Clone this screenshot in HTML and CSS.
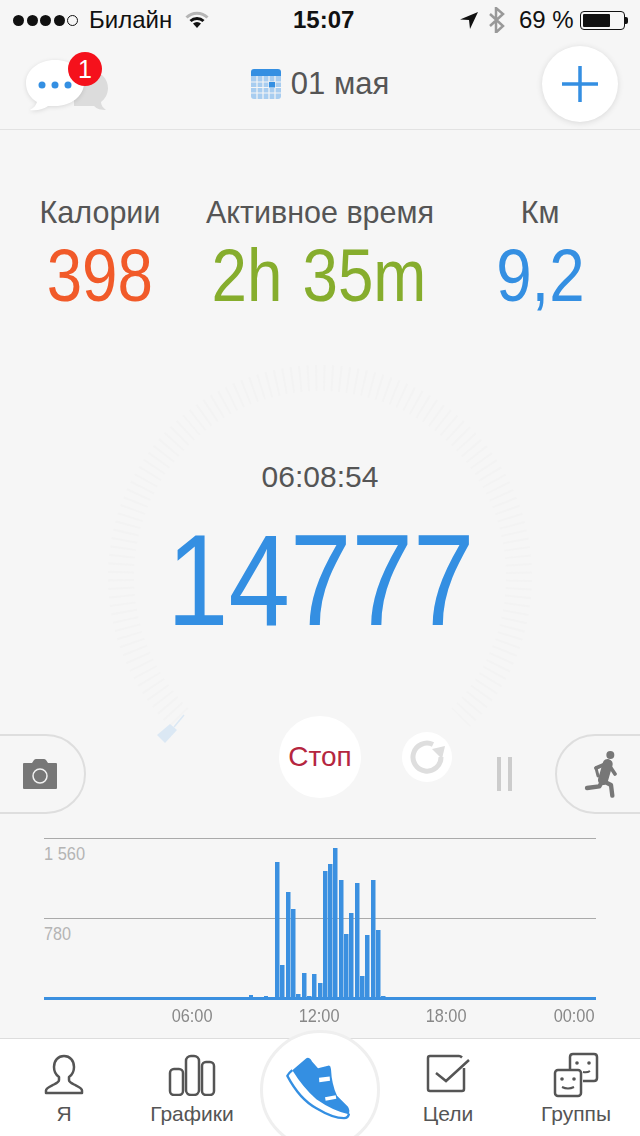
FILE: index.html
```html
<!DOCTYPE html>
<html lang="en">
<head>
    <meta charset="UTF-8">
    <meta name="viewport" content="width=device-width, initial-scale=1.0">
    <title>Шагомер</title>
    <link rel="stylesheet" href="styles.css">
</head>
<body>
    <div class="screen">
        <!-- status bar -->
        <div class="status">
            <div class="signal">
                <span class="dot"></span><span class="dot"></span><span class="dot"></span><span class="dot"></span><span class="dot dot-empty"></span>
            </div>
            <span class="carrier">Билайн</span>
            <svg class="wifi" width="24" height="18" viewBox="0 0 24 18">
                <path d="M1.5 6.5a15 15 0 0 1 21 0" fill="none" stroke="#b5b5b5" stroke-width="3"/>
                <path d="M5.5 10a9.5 9.5 0 0 1 13 0" fill="none" stroke="#111" stroke-width="3"/>
                <path d="M8 12.5a6 6 0 0 1 8 0L12 17z" fill="#111"/>
            </svg>
            <span class="clock">15:07</span>
            <svg class="arrow" width="18" height="17" viewBox="0 0 18 17">
                <path d="M0 7.5L18 0 10 17 9 8z" fill="#111"/>
            </svg>
            <svg class="bluetooth" width="16" height="26" viewBox="0 0 16 26">
                <path d="M1 7l13 12-7 6.5V1l7 6L1 19" fill="none" stroke="#999" stroke-width="2.5"/>
            </svg>
            <span class="percent">69 %</span>
            <div class="battery"><div class="battery-level"></div></div>
            <div class="battery-nub"></div>
        </div>

        <!-- header -->
        <div class="header">
            <div class="chat">
                <svg width="90" height="70" viewBox="0 0 90 70">
                    <path d="M68 24c10 0 18 7 18 17 0 6-3 11-7 14 0 3 2 6 5 8-5 0-9-1-12-4H52V30z" fill="#dcdcdc"/>
                    <path class="bubble" d="M33 13c16 0 29 10 29 23S49 59 33 59c-3 0-5 0-7 0-4 3-11 5-18 4 4-2 6-5 7-8C8 51 4 44 4 36 4 23 17 13 33 13z" fill="#fff"/>
                    <circle cx="20" cy="38" r="3.5" fill="#348fe2"/>
                    <circle cx="33" cy="38" r="3.5" fill="#348fe2"/>
                    <circle cx="46" cy="38" r="3.5" fill="#348fe2"/>
                </svg>
                <span class="badge">1</span>
            </div>
            <div class="date">
                <svg width="30" height="30" viewBox="0 0 30 30">
                    <path d="M3 0h24a3 3 0 0 1 3 3v4H0V3a3 3 0 0 1 3-3z" fill="#348fe2"/>
                    <path d="M0 7h30v20a3 3 0 0 1-3 3H3a3 3 0 0 1-3-3z" fill="#a8cdf0"/>
                    <path d="M6 7v23M12 7v23M18 7v23M24 7v23M0 13h30M0 18.5h30M0 24h30" stroke="#f6f6f6" stroke-width="1.2"/>
                    <rect x="18" y="13" width="6" height="5.5" fill="#348fe2"/>
                </svg>
                <span>01 мая</span>
            </div>
            <button class="add">
                <svg width="38" height="38" viewBox="0 0 38 38">
                    <path d="M19 1v36M1 19h36" stroke="#348fe2" stroke-width="3.5"/>
                </svg>
            </button>
        </div>

        <!-- today totals -->
        <div class="stats">
            <div class="stat">
                <div class="stat-label">Калории</div>
                <div class="stat-value orange"><span class="narrow">398</span></div>
            </div>
            <div class="stat">
                <div class="stat-label">Активное время</div>
                <div class="stat-value green"><span class="narrow">2h 35m</span></div>
            </div>
            <div class="stat">
                <div class="stat-label">Км</div>
                <div class="stat-value blue"><span class="narrow">9,2</span></div>
            </div>
        </div>

        <!-- step dial -->
        <div class="dial">
            <svg class="dial-ring" width="440" height="440" viewBox="0 0 440 440">
                <path d="M79.3 360.7A199 199 0 1 1 360.7 360.7" fill="none" stroke="#f3f3f3" stroke-width="26" stroke-dasharray="2 6"/>
                <path d="M57 378l8 8 12-13-7-6z" fill="#dbe8f4"/>
                <path d="M74 370l10-12" stroke="#dbe8f4" stroke-width="1.5"/>
            </svg>
            <div class="dial-time">06:08:54</div>
            <div class="dial-steps"><span class="narrow">14777</span></div>
        </div>

        <!-- controls -->
        <div class="controls">
            <div class="pill pill-left">
                <svg width="36" height="32" viewBox="0 0 36 32">
                    <path d="M2 5h8l2-3q1-1 2-1h8q1 0 2 1l2 3h8q1 0 1 1v24q0 1-1 1H2q-1 0-1-1V6q0-1 1-1z" fill="#777"/>
                    <circle cx="18" cy="18" r="7" fill="none" stroke="#f2f2f2" stroke-width="1.5"/>
                </svg>
            </div>
            <button class="stop">Стоп</button>
            <div class="refresh">
                <svg width="38" height="38" viewBox="0 0 38 38">
                    <path d="M25 6.5A14 14 0 1 0 33 19" fill="none" stroke="#dedede" stroke-width="5"/>
                    <path d="M24 11l13-3-3 13z" fill="#dedede"/>
                </svg>
            </div>
            <div class="pause"><span></span><span></span></div>
            <div class="pill pill-right">
                <svg width="40" height="50" viewBox="780 150 120 150">
                    <circle cx="868" cy="168" r="12" fill="#777"/>
                    <path d="M825 207l35-15 22 33" fill="none" stroke="#777" stroke-width="11" stroke-linecap="round" stroke-linejoin="round"/>
                    <path d="M860 195l-14 48" stroke="#777" stroke-width="30" stroke-linecap="round"/>
                    <path d="M825 207l6 24" stroke="#777" stroke-width="9" stroke-linecap="round"/>
                    <path d="M845 245l-10 17-37 5M850 248l20 10 4 32" fill="none" stroke="#777" stroke-width="13" stroke-linecap="round" stroke-linejoin="round"/>
                </svg>
            </div>
        </div>

        <!-- hourly chart -->
        <div class="chart">
            <svg class="chart-bars" width="552" height="162" viewBox="0 0 552 162">
                <rect class="grid-line" x="0" y="0" width="552" height="1"/>
                <rect class="grid-line" x="0" y="80" width="552" height="1"/>
                <text class="y-label" x="0" y="22" textLength="41" lengthAdjust="spacingAndGlyphs">1 560</text>
                <text class="y-label" x="0" y="102" textLength="27" lengthAdjust="spacingAndGlyphs">780</text>
                <g class="bar">
                    <rect x="205" y="157" width="4" height="3"/>
                    <rect x="220" y="158" width="4" height="2"/>
                    <rect x="231" y="24" width="4.5" height="136"/>
                    <rect x="236" y="127" width="4.5" height="33"/>
                    <rect x="242" y="54" width="4.5" height="106"/>
                    <rect x="247" y="71" width="4.5" height="89"/>
                    <rect x="252" y="156" width="4.5" height="4"/>
                    <rect x="258" y="135" width="4.5" height="25"/>
                    <rect x="263" y="158" width="4.5" height="2"/>
                    <rect x="268" y="136" width="4.5" height="24"/>
                    <rect x="274" y="145" width="4.5" height="15"/>
                    <rect x="279" y="33" width="4.5" height="127"/>
                    <rect x="284" y="26" width="4.5" height="134"/>
                    <rect x="289" y="10" width="4.5" height="150"/>
                    <rect x="295" y="42" width="4.5" height="118"/>
                    <rect x="300" y="96" width="4.5" height="64"/>
                    <rect x="305" y="75" width="4.5" height="85"/>
                    <rect x="311" y="45" width="4.5" height="115"/>
                    <rect x="316" y="138" width="4.5" height="22"/>
                    <rect x="321" y="97" width="4.5" height="63"/>
                    <rect x="327" y="42" width="4.5" height="118"/>
                    <rect x="332" y="92" width="4.5" height="68"/>
                    <rect x="337" y="158" width="4.5" height="2"/>
                    <rect x="0" y="159" width="552" height="3"/>
                </g>
            </svg>
            <div class="hours">
                <span class="hour"><span class="narrow-right">06:00</span></span>
                <span class="hour"><span class="narrow-right">12:00</span></span>
                <span class="hour"><span class="narrow-right">18:00</span></span>
                <span class="hour"><span class="narrow-right">00:00</span></span>
            </div>
        </div>

        <!-- tab bar -->
        <div class="tabs">
            <div class="tab">
                <svg width="40" height="42" viewBox="0 0 40 42">
                    <path d="M20 2c-6 0-10 4.5-10 11 0 4 2 8 5 10v3c0 2-2 3-5 4.5-4 2-8 3.5-8 6V39h36v-2.5c0-2.500-4-4-8-6-3-1.500-5-2.500-5-4.500v-3c3-2 5-6 5-10 0-6.500-4-11-10-11z" fill="none" stroke="#555" stroke-width="2.5" stroke-linejoin="round"/>
                </svg>
                <span>Я</span>
            </div>
            <div class="tab">
                <svg width="48" height="42" viewBox="0 0 48 42">
                    <rect x="2" y="15" width="13" height="26" rx="4" fill="none" stroke="#555" stroke-width="2.5"/>
                    <rect x="18" y="2" width="13" height="39" rx="5" fill="none" stroke="#555" stroke-width="2.5"/>
                    <rect x="34" y="8" width="12" height="33" rx="4" fill="none" stroke="#555" stroke-width="2.5"/>
                </svg>
                <span>Графики</span>
            </div>
            <div class="tab tab-main">
                <svg width="70" height="67" viewBox="100 70 210 200">
                    <path d="M128 118Q118 126 113 135 150 205 200 232 250 262 283 262 296 262 298 248" fill="#fff" stroke="#348fe2" stroke-width="7" stroke-linejoin="round"/>
                    <path d="M128 118L170 82Q180 78 187 92L205 112 238 104Q243 105 244 115 246 160 262 195L295 228Q302 240 297 250 250 240 200 205 160 170 128 118z" fill="#348fe2"/>
                    <path d="M208 141l32-4 1 13-32 4zM226 199l32-6 2 11-32 6z" fill="#fff"/>
                </svg>
            </div>
            <div class="tab">
                <svg width="44" height="42" viewBox="0 0 44 42">
                    <path d="M36 3.5c-1-1-1.500-1.500-3-1.500H4Q2 2 2 4v31q0 2 2 2h32q2 0 2-2V14" fill="none" stroke="#555" stroke-width="2.5"/>
                    <path d="M10 19l10 8L43 6" fill="none" stroke="#555" stroke-width="2.5"/>
                </svg>
                <span>Цели</span>
            </div>
            <div class="tab">
                <svg width="46" height="46" viewBox="0 0 46 46" class="groups">
                    <path d="M17 18V5q0-3 3-3h21q3 0 3 3v21q0 3-3 3H30" fill="none" stroke="#555" stroke-width="2.5"/>
                    <rect x="2" y="18" width="26" height="26" rx="3" fill="none" stroke="#555" stroke-width="2.5"/>
                    <circle cx="24" cy="11" r="1.8" fill="#555"/>
                    <circle cx="36" cy="11" r="1.8" fill="#555"/>
                    <path d="M30 20q4 1 7-1" fill="none" stroke="#555" stroke-width="2"/>
                    <circle cx="9" cy="27" r="1.8" fill="#555"/>
                    <circle cx="21" cy="27" r="1.8" fill="#555"/>
                    <path d="M9 35q6 3 12 0" fill="none" stroke="#555" stroke-width="2"/>
                </svg>
                <span>Группы</span>
            </div>
        </div>
    </div>
</body>
</html>
```

FILE: styles.css
```css
/* CSS styles */
body, button {
    margin: 0;
    padding: 0;
    box-sizing: border-box;
}

body {
    font-family: 'Liberation Sans', Arial, sans-serif;
    background-color: #f6f6f6;
    color: #555;
}

.screen {
    width: 640px;
    height: 1136px;
    display: flex;
    flex-direction: column;
    overflow: hidden;
}

.narrow {
    display: inline-block;
    white-space: nowrap;
    transform: scaleX(0.86);
}

.narrow-right {
    display: inline-block;
    transform: scaleX(0.86);
    transform-origin: right center;
}

/* status bar */
.status {
    height: 40px;
    flex-shrink: 0;
    display: flex;
    align-items: center;
    color: #111;
    font-size: 24px;
    padding-left: 13px;
}

.signal {
    display: flex;
    gap: 2.5px;
    width: 76px;
}

.dot {
    width: 11px;
    height: 11px;
    border-radius: 50%;
    background-color: #111;
    box-sizing: border-box;
}

.dot-empty {
    background-color: transparent;
    border: 1px solid #111;
}

.wifi {
    margin-left: 11px;
}

.carrier {
    width: 85px;
}

.clock {
    font-weight: bold;
    width: 64px;
    margin-left: 84px;
}

.arrow {
    margin-left: 103px;
}

.bluetooth {
    margin-left: 11px;
}

.percent {
    margin-left: 14px;
    width: 61px;
}

.battery {
    width: 45px;
    height: 19px;
    border: 1px solid #111;
    border-radius: 4px;
    padding: 2px;
    box-sizing: border-box;
}

.battery-level {
    width: 69%;
    height: 100%;
    background-color: #111;
    border-radius: 1px;
}

.battery-nub {
    width: 3px;
    height: 7px;
    background-color: #111;
    border-radius: 0 2px 2px 0;
}

/* header */
.header {
    height: 90px;
    flex-shrink: 0;
    box-sizing: border-box;
    border-bottom: 1px solid #e2e2e2;
    display: grid;
    grid-template-columns: 1fr auto 1fr;
    align-items: center;
    padding: 0 22px;
}

.chat {
    position: relative;
    width: 90px;
    height: 70px;
    margin-top: -6px;
}

.bubble {
    filter: drop-shadow(0 1px 2px rgba(0, 0, 0, 0.12));
}

.badge {
    position: absolute;
    left: 46px;
    top: 5px;
    width: 34px;
    height: 34px;
    border-radius: 50%;
    background-color: #f5111c;
    color: #fff;
    font-size: 25px;
    line-height: 34px;
    text-align: center;
}

.date {
    display: flex;
    align-items: center;
    gap: 10px;
    font-size: 31px;
    margin-top: -2px;
}

.add {
    justify-self: end;
    width: 76px;
    height: 76px;
    border: none;
    border-radius: 50%;
    background-color: #fff;
    box-shadow: 0 1px 6px rgba(0, 0, 0, 0.12);
    display: flex;
    align-items: center;
    justify-content: center;
    margin-top: -1px;
}

/* totals */
.stats {
    display: grid;
    grid-template-columns: 200px 240px 200px;
    padding-top: 64px;
    text-align: center;
    flex-shrink: 0;
}

.stat-label {
    font-size: 30.5px;
    line-height: 36px;
}

.stat-value {
    font-size: 74px;
    line-height: 80px;
    margin-top: 6px;
}

.orange { color: #f15a29; }
.blue { color: #348fe2; }

.green {
    color: #86ad2d;
    margin-left: -6px;
    word-spacing: 3px;
}

/* dial */
.dial {
    flex: 1;
    position: relative;
    padding-top: 143px;
    text-align: center;
}

.dial-ring {
    position: absolute;
    left: 100px;
    top: 41px;
    overflow: visible;
}

.dial-time,
.dial-steps {
    position: relative;
}

.dial-time {
    font-size: 30px;
    line-height: 36px;
}

.dial-steps {
    font-size: 130px;
    line-height: 130px;
    margin-top: 20px;
    padding-left: 2px;
    color: #348fe2;
}

.dial-steps .narrow {
    transform: scaleX(0.85);
}

/* controls */
.controls {
    height: 100px;
    flex-shrink: 0;
    display: flex;
    align-items: flex-start;
}

.pill {
    width: 126px;
    height: 80px;
    margin-top: 19px;
    flex-shrink: 0;
    box-sizing: border-box;
    border: 2px solid #dedede;
    border-radius: 40px;
    display: flex;
    align-items: center;
}

.pill-left {
    margin-left: -40px;
    justify-content: flex-end;
    padding-right: 26px;
}

.pill-right {
    margin-left: 43px;
    padding-left: 24px;
}

.stop {
    width: 82px;
    height: 82px;
    margin: 1px 0 0 193px;
    border: none;
    border-radius: 50%;
    background-color: #fff;
    color: #b5263f;
    font-family: inherit;
    font-size: 28px;
    flex-shrink: 0;
}

.refresh {
    width: 50px;
    height: 50px;
    margin: 17px 0 0 41px;
    border-radius: 50%;
    background-color: #fff;
    flex-shrink: 0;
    display: flex;
    align-items: center;
    justify-content: center;
}

.pause {
    display: flex;
    gap: 7px;
    margin: 42px 0 0 45px;
    flex-shrink: 0;
}

.pause span {
    width: 4px;
    height: 34px;
    background-color: #ccc;
}

/* chart */
.chart {
    padding: 23px 44px 0;
    flex-shrink: 0;
    height: 223px;
    box-sizing: border-box;
}

.chart-bars {
    display: block;
}

.grid-line {
    fill: #aaa;
}

.bar rect {
    fill: #3b90e0;
}

.y-label {
    fill: #b4b4b4;
    font-size: 19px;
}

.hours {
    display: grid;
    grid-template-columns: repeat(4, 127.3px);
    padding-left: 41px;
    color: #888;
    font-size: 19px;
    line-height: 32px;
}

.hour {
    text-align: right;
}

/* tab bar */
.tabs {
    height: 98px;
    flex-shrink: 0;
    box-sizing: border-box;
    border-top: 1px solid #ddd;
    background-color: #fff;
    display: grid;
    grid-template-columns: repeat(5, 128px);
    grid-template-rows: 97px;
}

.tab {
    display: flex;
    flex-direction: column;
    align-items: center;
    justify-content: flex-end;
    padding-bottom: 10px;
    font-size: 21px;
    line-height: 24px;
    gap: 6px;
}

.groups {
    margin-bottom: -2px;
}

.tab-main {
    width: 120px;
    height: 120px;
    justify-self: center;
    margin-top: -9px;
    box-sizing: border-box;
    border: 3px solid #efefef;
    border-radius: 50%;
    background-color: #fff;
    padding: 0 4px 6px 0;
    justify-content: center;
}
```
